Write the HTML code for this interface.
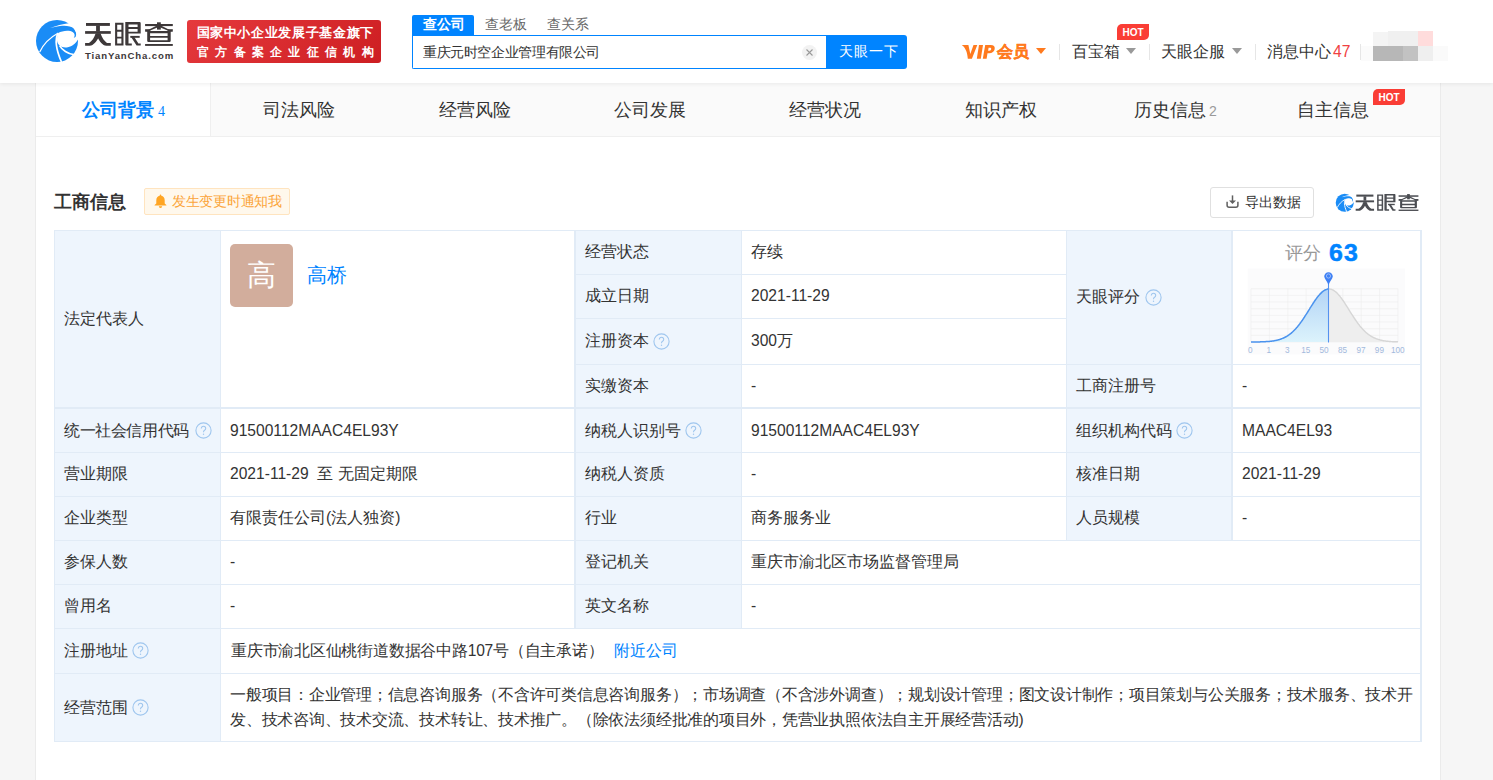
<!DOCTYPE html>
<html><head><meta charset="utf-8">
<style>
html,body{margin:0;padding:0;}
body{width:1493px;height:780px;overflow:hidden;background:#f6f6f6;position:relative;font-family:"Liberation Sans",sans-serif;color:#333;}
.a{position:absolute;white-space:nowrap;line-height:1;}
#hdr{position:absolute;left:0;top:0;width:1493px;height:83px;background:#fff;box-shadow:0 1px 4px rgba(0,0,0,0.07);z-index:5;}
#card{position:absolute;left:35px;top:83px;width:1404px;height:720px;background:#fff;border-left:1px solid #ebebeb;border-right:1px solid #ebebeb;}
.sep{position:absolute;top:44px;width:1px;height:16px;background:#e6e6e6;}
.tri{position:absolute;width:0;height:0;border-left:5px solid transparent;border-right:5px solid transparent;border-top:6px solid #999;}
.hot{position:absolute;background:#fa3d35;color:#fff;font-weight:700;font-size:10px;line-height:18px;text-align:center;border-radius:5px 0 5px 0;}
.tab{position:absolute;top:102px;font-size:17.8px;color:#333;white-space:nowrap;line-height:1;}
.vl{position:absolute;background:#e1ebf6;}
.lb{position:absolute;background:#eef5fd;}
.t{position:absolute;white-space:nowrap;line-height:1;font-size:15.6px;color:#333;}
.q{position:absolute;width:14px;height:14px;border:1px solid #a9cdf0;border-radius:50%;color:#9cc4ec;font-size:11px;line-height:14px;text-align:center;}
</style></head><body>
<div id="hdr">
  <!-- logo -->
  <svg class="a" style="left:32px;top:16px" width="50" height="50" viewBox="0 0 50 50">
    <circle cx="25" cy="25" r="21" fill="#1a8cf6"/>
    <path d="M18,12 C24,9.6 31,8 36.5,7.2 L50,0 L50,24 L42.5,22 C44.8,20.5 44.8,16 42,12.5 C39,9.8 33,9.2 28,10 C24,10.5 21,11.2 18,12 Z" fill="#fff"/>
    <path d="M26.3,17 C30,14.8 37,13.6 41,16.2 C43,17.8 43.2,20.2 41.7,21.5 L50,22 L50,23.7 L45.8,23.7 C44,27 40,30.5 35.9,31.2 C32,31.8 29.5,31 28.2,30 C25.8,28.3 24.8,26 25,23 C25.2,20.3 25.6,18.2 26.3,17 Z" fill="#fff"/>
    <path d="M7.7,36 C11,29 17,22 26.3,17" stroke="#fff" stroke-width="1.3" fill="none"/>
    <path d="M26,17.3 C23.5,22 23,31 29.5,46" stroke="#fff" stroke-width="1.7" fill="none"/>
    <path d="M27.6,29.6 C30,34 36,38 41.7,38.6" stroke="#fff" stroke-width="1.6" fill="none"/>
  </svg>
  <svg class="a" style="left:80px;top:18px" width="100" height="32" viewBox="80 18 100 32"><g fill="#3d3839">
<rect x="86" y="23" width="23.9" height="2.9"/>
<rect x="85.1" y="31.1" width="25.7" height="2.7"/>
<rect x="96.1" y="25.5" width="3.8" height="6"/>
<path d="M95.6,33.6 L100.2,33.6 C98.6,38.6 95.8,43 92.4,44.9 C91.6,45.4 90.8,45.7 89.6,45.7 L85.1,45.7 L85.1,42.9 L89,42.9 C92,41.4 94.2,38 95.6,33.6 Z"/>
<path d="M96.2,33.6 L100.6,33.6 C102,38 104.4,41.4 107,42.9 L110.8,42.9 L110.8,45.7 L106.4,45.7 C105.2,45.7 104.4,45.4 103.6,44.9 C100.4,43 97.6,38.6 96.2,33.6 Z"/>
<path fill-rule="evenodd" d="M115.1,22.8 H123.5 V45.5 H115.1 Z M117.2,24.7 V29.8 H121.4 V24.7 Z M117.2,31.7 V36.7 H121.4 V31.7 Z M117.2,38.6 V43.6 H121.4 V38.6 Z"/>
<path fill-rule="evenodd" d="M125.3,22.1 H139.6 Q140.7,22.1 140.7,23.2 V33.6 H128.5 V43.6 H131.8 V45.5 H126.4 Q125.3,45.5 125.3,44.4 Z M128.5,24.4 V27.1 H137.6 V24.4 Z M128.5,29 V31.7 H137.6 V29 Z"/>
<rect x="130.3" y="35.9" width="9.4" height="1.9"/>
<path d="M130.6,36.2 L133.8,36.2 L138.4,43.6 L140.7,43.6 L140.7,45.5 L136.6,45.5 Z"/>
<rect x="145.1" y="24" width="27.7" height="2.1"/>
<rect x="157" y="22.3" width="3.8" height="7.3"/>
<path d="M157.4,25.2 L158.6,27.1 L148.4,31.2 L145.6,31.2 Z"/>
<path d="M160.4,25.2 L159.2,27.1 L169.4,31.2 L172.2,31.2 Z"/>
<rect x="145.1" y="29.2" width="5.2" height="2.5"/>
<rect x="167.6" y="29.2" width="5.2" height="2.5"/>
<path fill-rule="evenodd" d="M147.2,30.9 H170.7 V40.8 Q170.7,42.1 169.4,42.1 H148.5 Q147.2,42.1 147.2,40.8 Z M150.1,33.2 V35.9 H167.6 V33.2 Z M150.1,37.8 V40.2 H167.6 V37.8 Z"/>
<rect x="145.1" y="44" width="27.7" height="1.9"/>
</g></svg>
  <div class="a" style="left:85px;top:51px;font-size:9.6px;font-weight:700;color:#3d3839;letter-spacing:0.85px;">TianYanCha.com</div>
  <div class="a" style="left:187px;top:20px;width:194px;height:43px;border-radius:3px;background:linear-gradient(135deg,#e5393d,#cd1e22);"></div>
  <div class="a" style="left:196.5px;top:26px;font-size:13.4px;letter-spacing:0.65px;color:#fff;font-weight:700;">国家中小企业发展子基金旗下</div>
  <div class="a" style="left:197px;top:46px;font-size:12.3px;color:#fff;letter-spacing:6.3px;font-weight:700;">官方备案企业征信机构</div>

  <!-- search -->
  <div class="a" style="left:412px;top:15px;width:62px;height:21px;background:#0084ff;border-radius:2px 2px 0 0;"></div>
  <div class="a" style="left:423px;top:18px;font-size:13.5px;font-weight:700;color:#fff;">查公司</div>
  <div class="a" style="left:485px;top:18px;font-size:13.5px;color:#666;">查老板</div>
  <div class="a" style="left:547px;top:18px;font-size:13.5px;color:#666;">查关系</div>
  <div class="a" style="left:412px;top:35px;width:414px;height:32px;border:1px solid #0084ff;border-right:none;border-radius:0 0 0 2px;background:#fff;"></div>
  <div class="a" style="left:423px;top:46px;font-size:13.5px;letter-spacing:-0.38px;color:#333;">重庆元时空企业管理有限公司</div>
  <div class="a" style="left:802px;top:45px;width:15px;height:15px;border-radius:50%;background:#f2f2f2;"></div><svg class="a" style="left:805px;top:48px" width="9" height="9" viewBox="0 0 9 9"><path d="M1.5 1.5L7.5 7.5M7.5 1.5L1.5 7.5" stroke="#999" stroke-width="1.1"/></svg>
  <div class="a" style="left:826px;top:35px;width:81px;height:34px;background:#0084ff;border-radius:0 3px 3px 0;"></div>
  <div class="a" style="left:839px;top:45px;font-size:13.8px;letter-spacing:1px;color:#fff;">天眼一下</div>

  <!-- right nav -->
  <svg class="a" style="left:958px;top:38px" width="40" height="26" viewBox="0 0 40 26"><g fill="#ff7a1e"><path d="M3.8,7.1 L10.4,7.1 L12.3,16 L15.5,7.1 L19.3,7.1 L13.9,20.7 L9.8,20.7 C9.3,15.2 8.2,10.6 3.8,7.1 Z"/><path d="M21,7.1 L25,7.1 L22.8,20.7 L18.8,20.7 Z"/><path fill-rule="evenodd" d="M27.2,7.1 L32.6,7.1 C35.8,7.1 37.1,8.6 36.7,11.1 C36.3,13.8 34.3,15.3 31,15.3 L29.5,15.3 L28.6,20.7 L24.8,20.7 Z M30.6,9.7 L30.1,12.7 L31.3,12.7 C32.5,12.7 33.1,12.1 33.2,11.1 C33.3,10.2 32.8,9.7 31.7,9.7 Z"/></g></svg>
  <div class="a" style="left:997px;top:44px;font-size:15.6px;font-weight:700;color:#ff7a1e;letter-spacing:-0.3px;-webkit-text-stroke:0.3px #ff7a1e;">会员</div>
  <div class="tri" style="left:1036px;top:48px;border-top-color:#ff7a1e;"></div>
  <div class="sep" style="left:1059px;"></div>
  <div class="a" style="left:1072px;top:44px;font-size:15.6px;color:#333;">百宝箱</div>
  <div class="tri" style="left:1126px;top:48px;"></div>
  <div class="hot" style="left:1117px;top:24px;width:32px;height:16px;">HOT</div>
  <div class="sep" style="left:1149px;"></div>
  <div class="a" style="left:1161px;top:44px;font-size:15.6px;color:#333;">天眼企服</div>
  <div class="tri" style="left:1232px;top:48px;"></div>
  <div class="sep" style="left:1255px;"></div>
  <div class="a" style="left:1267px;top:44px;font-size:15.6px;color:#333;">消息中心<span style="color:#f04142;margin-left:2px">47</span></div>
  <div class="sep" style="left:1360px;"></div>
  <!-- blurred user -->
  <div class="a" style="left:1373px;top:32px;width:15px;height:14px;background:#f4f4f4;"></div>
  <div class="a" style="left:1388px;top:31px;width:30px;height:15px;background:#f0f0f0;"></div>
  <div class="a" style="left:1418px;top:31px;width:15px;height:15px;background:#ffdcdc;"></div>
  <div class="a" style="left:1361px;top:46px;width:12px;height:15px;background:#fbfbfb;"></div>
  <div class="a" style="left:1373px;top:46px;width:30px;height:15px;background:#b7b7b7;"></div>
  <div class="a" style="left:1403px;top:46px;width:15px;height:15px;background:#c2c2c2;"></div>
  <div class="a" style="left:1418px;top:46px;width:15px;height:15px;background:#efefef;"></div>
  <div class="a" style="left:1433px;top:46px;width:15px;height:15px;background:#fafafa;"></div>
</div>

<div id="card"></div>
<!-- tabs -->
<div class="a" style="left:36px;top:83px;width:1404px;height:53px;background:#fafafa;border-bottom:1px solid #efefef;"></div>
<div class="a" style="left:36px;top:83px;width:174px;height:53px;background:#fff;border-right:1px solid #efefef;"></div>
<div class="a" style="left:82px;top:102px;font-size:17.8px;font-weight:700;color:#0084ff;">公司背景<span style="font-size:14px;font-weight:400;margin-left:4px;font-family:'Liberation Serif',serif">4</span></div>
<div class="tab" style="left:263px;">司法风险</div>
<div class="tab" style="left:439px;">经营风险</div>
<div class="tab" style="left:614px;">公司发展</div>
<div class="tab" style="left:789px;">经营状况</div>
<div class="tab" style="left:965px;">知识产权</div>
<div class="tab" style="left:1134px;">历史信息<span style="font-size:14px;color:#999;margin-left:3px">2</span></div>
<div class="tab" style="left:1297px;">自主信息</div>
<div class="hot" style="left:1373px;top:89px;width:32px;height:16px;">HOT</div>

<!-- title -->
<div class="a" style="left:54px;top:194px;font-size:17.8px;font-weight:700;color:#333;">工商信息</div>
<div class="a" style="left:144px;top:188px;width:144px;height:25px;background:#fff8ec;border:1px solid #ffe4bf;border-radius:2px;"></div>
<svg class="a" style="left:154px;top:194px" width="13" height="14" viewBox="0 0 13 14"><path d="M6.5 0.6c-0.5 0-0.8 0.3-0.8 0.8v0.4C3.6 2.3 2.3 4 2.3 6.2v3.2L0.6 10.9v0.7h11.8v-0.7L10.7 9.4V6.2C10.7 4 9.4 2.3 7.3 1.8V1.4c0-0.5-0.3-0.8-0.8-0.8z" fill="#ffa523"/><path d="M4.8 12.2a1.7 1.7 0 0 0 3.4 0z" fill="#ffa523"/></svg>
<div class="a" style="left:172px;top:195px;font-size:13.5px;letter-spacing:-0.3px;color:#fba53a;">发生变更时通知我</div>

<div class="a" style="left:1210px;top:187px;width:102px;height:29px;background:#fff;border:1px solid #e0e0e0;border-radius:3px;"></div>
<svg class="a" style="left:1225px;top:194px" width="15" height="15" viewBox="0 0 15 15"><path d="M2.1 7.8V11.2Q2.1 13.2 4.1 13.2H10.9Q12.9 13.2 12.9 11.2V7.8" stroke="#606060" stroke-width="1.5" fill="none"/><path d="M7.5 1.4V7.5" stroke="#606060" stroke-width="1.5"/><path d="M4 6.4H11L7.5 10.1Z" fill="#606060"/></svg>
<div class="a" style="left:1245px;top:196px;font-size:13.6px;color:#333;">导出数据</div>
<svg class="a" style="left:1334px;top:192px" width="21.5" height="21.5" viewBox="0 0 50 50">
    <circle cx="25" cy="25" r="21" fill="#1a8cf6"/>
    <path d="M18,12 C24,9.6 31,8 36.5,7.2 L50,0 L50,24 L42.5,22 C44.8,20.5 44.8,16 42,12.5 C39,9.8 33,9.2 28,10 C24,10.5 21,11.2 18,12 Z" fill="#fff"/>
    <path d="M26.3,17 C30,14.8 37,13.6 41,16.2 C43,17.8 43.2,20.2 41.7,21.5 L50,22 L50,23.7 L45.8,23.7 C44,27 40,30.5 35.9,31.2 C32,31.8 29.5,31 28.2,30 C25.8,28.3 24.8,26 25,23 C25.2,20.3 25.6,18.2 26.3,17 Z" fill="#fff"/>
    <path d="M7.7,36 C11,29 17,22 26.3,17" stroke="#fff" stroke-width="2" fill="none"/>
    <path d="M26,17.3 C23.5,22 23,31 29.5,46" stroke="#fff" stroke-width="2.2" fill="none"/>
    <path d="M27.6,29.6 C30,34 36,38 41.7,38.6" stroke="#fff" stroke-width="2" fill="none"/>
  </svg>
<svg class="a" style="left:1351.8px;top:190.9px" width="71.6" height="22.9" viewBox="80 18 100 32"><g fill="#4b4d52">
<rect x="86" y="23" width="23.9" height="2.9"/>
<rect x="85.1" y="31.1" width="25.7" height="2.7"/>
<rect x="96.1" y="25.5" width="3.8" height="6"/>
<path d="M95.6,33.6 L100.2,33.6 C98.6,38.6 95.8,43 92.4,44.9 C91.6,45.4 90.8,45.7 89.6,45.7 L85.1,45.7 L85.1,42.9 L89,42.9 C92,41.4 94.2,38 95.6,33.6 Z"/>
<path d="M96.2,33.6 L100.6,33.6 C102,38 104.4,41.4 107,42.9 L110.8,42.9 L110.8,45.7 L106.4,45.7 C105.2,45.7 104.4,45.4 103.6,44.9 C100.4,43 97.6,38.6 96.2,33.6 Z"/>
<path fill-rule="evenodd" d="M115.1,22.8 H123.5 V45.5 H115.1 Z M117.2,24.7 V29.8 H121.4 V24.7 Z M117.2,31.7 V36.7 H121.4 V31.7 Z M117.2,38.6 V43.6 H121.4 V38.6 Z"/>
<path fill-rule="evenodd" d="M125.3,22.1 H139.6 Q140.7,22.1 140.7,23.2 V33.6 H128.5 V43.6 H131.8 V45.5 H126.4 Q125.3,45.5 125.3,44.4 Z M128.5,24.4 V27.1 H137.6 V24.4 Z M128.5,29 V31.7 H137.6 V29 Z"/>
<rect x="130.3" y="35.9" width="9.4" height="1.9"/>
<path d="M130.6,36.2 L133.8,36.2 L138.4,43.6 L140.7,43.6 L140.7,45.5 L136.6,45.5 Z"/>
<rect x="145.1" y="24" width="27.7" height="2.1"/>
<rect x="157" y="22.3" width="3.8" height="7.3"/>
<path d="M157.4,25.2 L158.6,27.1 L148.4,31.2 L145.6,31.2 Z"/>
<path d="M160.4,25.2 L159.2,27.1 L169.4,31.2 L172.2,31.2 Z"/>
<rect x="145.1" y="29.2" width="5.2" height="2.5"/>
<rect x="167.6" y="29.2" width="5.2" height="2.5"/>
<path fill-rule="evenodd" d="M147.2,30.9 H170.7 V40.8 Q170.7,42.1 169.4,42.1 H148.5 Q147.2,42.1 147.2,40.8 Z M150.1,33.2 V35.9 H167.6 V33.2 Z M150.1,37.8 V40.2 H167.6 V37.8 Z"/>
<rect x="145.1" y="44" width="27.7" height="1.9"/>
</g></svg>

<!-- TABLE -->
<div class="a" style="left:54px;top:230px;width:1368px;height:512px;background:#fff;"></div>
<!-- label backgrounds -->
<div class="lb" style="left:55px;top:231px;width:165px;height:510px;"></div>
<div class="lb" style="left:576px;top:231px;width:165px;height:397px;"></div>
<div class="lb" style="left:1067px;top:231px;width:164px;height:309px;"></div>
<!-- horizontal lines -->
<div class="vl" style="left:54px;top:230px;width:1368px;height:1px;"></div>
<div class="vl" style="left:576px;top:274px;width:490px;height:1px;"></div>
<div class="vl" style="left:576px;top:318px;width:490px;height:1px;"></div>
<div class="vl" style="left:576px;top:364px;width:846px;height:1px;"></div>
<div class="vl" style="left:54px;top:407px;width:1368px;height:2px;"></div>
<div class="vl" style="left:54px;top:452px;width:1368px;height:1px;"></div>
<div class="vl" style="left:54px;top:496px;width:1368px;height:1px;"></div>
<div class="vl" style="left:54px;top:540px;width:1368px;height:1px;"></div>
<div class="vl" style="left:54px;top:584px;width:1368px;height:1px;"></div>
<div class="vl" style="left:54px;top:628px;width:1368px;height:1px;"></div>
<div class="vl" style="left:54px;top:673px;width:1368px;height:1px;"></div>
<div class="vl" style="left:54px;top:741px;width:1368px;height:1px;"></div>
<!-- vertical lines -->
<div class="vl" style="left:54px;top:230px;width:1px;height:512px;"></div>
<div class="vl" style="left:220px;top:230px;width:1px;height:512px;"></div>
<div class="vl" style="left:574px;top:230px;width:2px;height:399px;"></div>
<div class="vl" style="left:741px;top:230px;width:1px;height:399px;"></div>
<div class="vl" style="left:1066px;top:230px;width:1px;height:311px;"></div>
<div class="vl" style="left:1231px;top:230px;width:2px;height:311px;"></div>
<div class="vl" style="left:1420px;top:230px;width:2px;height:512px;"></div>

<!-- row A -->
<div class="t" style="left:64px;top:311px;">法定代表人</div>
<div class="a" style="left:230px;top:244px;width:63px;height:63px;border-radius:5px;background:#d2ad9c;"></div>
<div class="a" style="left:247px;top:261px;font-size:29px;color:#fff;">高</div>
<div class="a" style="left:307px;top:266px;font-size:19.8px;color:#0084ff;">高桥</div>

<div class="t" style="left:585px;top:244px;">经营状态</div>
<div class="t" style="left:751px;top:244px;">存续</div>
<div class="t" style="left:585px;top:288px;">成立日期</div>
<div class="t" style="left:751px;top:288px;">2021-11-29</div>
<div class="t" style="left:585px;top:333px;">注册资本</div>
<svg class="a" style="left:653px;top:333px" width="17" height="17" viewBox="0 0 17 17"><circle cx="8.5" cy="8.5" r="7.6" fill="none" stroke="#9fc6ee" stroke-width="1.1"/><path d="M6.3 6.6C6.3 5.2 7.2 4.3 8.5 4.3S10.7 5.2 10.7 6.4C10.7 7.6 9.8 8 9.2 8.5C8.7 8.9 8.5 9.3 8.5 10.3" fill="none" stroke="#9fc6ee" stroke-width="1.05"/><circle cx="8.5" cy="12.3" r="0.7" fill="#9fc6ee"/></svg>
<div class="t" style="left:751px;top:333px;">300万</div>
<div class="t" style="left:585px;top:378px;">实缴资本</div>
<div class="t" style="left:751px;top:378px;">-</div>

<div class="t" style="left:1076px;top:289px;">天眼评分</div>
<svg class="a" style="left:1144.5px;top:288.5px" width="17" height="17" viewBox="0 0 17 17"><circle cx="8.5" cy="8.5" r="7.6" fill="none" stroke="#9fc6ee" stroke-width="1.1"/><path d="M6.3 6.6C6.3 5.2 7.2 4.3 8.5 4.3S10.7 5.2 10.7 6.4C10.7 7.6 9.8 8 9.2 8.5C8.7 8.9 8.5 9.3 8.5 10.3" fill="none" stroke="#9fc6ee" stroke-width="1.05"/><circle cx="8.5" cy="12.3" r="0.7" fill="#9fc6ee"/></svg>
<div class="t" style="left:1076px;top:378px;">工商注册号</div>
<div class="t" style="left:1242px;top:378px;">-</div>
<!-- CHART --><svg class="a" style="left:1240px;top:240px" width="175" height="120" viewBox="0 0 175 120">
<defs><linearGradient id="bg1" x1="0" y1="0" x2="0" y2="1"><stop offset="0" stop-color="#b3d4f6"/><stop offset="1" stop-color="#dcf3fc"/></linearGradient></defs>
<rect x="7.7" y="28.6" width="157.3" height="85.8" fill="#fbfbfc"/>
<g stroke="#ececec" stroke-width="0.6"><line x1="11.0" y1="48.7" x2="11.0" y2="102" /><line x1="29.4" y1="48.7" x2="29.4" y2="102" /><line x1="47.8" y1="48.7" x2="47.8" y2="102" /><line x1="66.1" y1="48.7" x2="66.1" y2="102" /><line x1="84.5" y1="48.7" x2="84.5" y2="102" /><line x1="102.9" y1="48.7" x2="102.9" y2="102" /><line x1="121.2" y1="48.7" x2="121.2" y2="102" /><line x1="139.6" y1="48.7" x2="139.6" y2="102" /><line x1="158.0" y1="48.7" x2="158.0" y2="102" /><line x1="11" y1="48.7" x2="158" y2="48.7" /><line x1="11" y1="55.4" x2="158" y2="55.4" /><line x1="11" y1="62.0" x2="158" y2="62.0" /><line x1="11" y1="68.7" x2="158" y2="68.7" /><line x1="11" y1="75.4" x2="158" y2="75.4" /><line x1="11" y1="82.0" x2="158" y2="82.0" /><line x1="11" y1="88.7" x2="158" y2="88.7" /><line x1="11" y1="95.3" x2="158" y2="95.3" /><line x1="11" y1="102.0" x2="158" y2="102.0" /></g>
<path d="M88.5,102 L88.5,49.0 89.0,49.0 89.5,49.0 90.0,49.1 90.5,49.1 91.0,49.3 91.5,49.4 92.0,49.6 92.5,49.8 93.0,50.0 93.5,50.3 94.0,50.6 94.5,51.0 95.0,51.3 95.5,51.7 96.0,52.1 96.5,52.6 97.0,53.1 97.5,53.6 98.0,54.1 98.5,54.7 99.0,55.2 99.5,55.8 100.0,56.4 100.5,57.1 101.0,57.7 101.5,58.4 102.0,59.1 102.5,59.8 103.0,60.5 103.5,61.2 104.0,62.0 104.5,62.7 105.0,63.5 105.5,64.3 106.0,65.1 106.5,65.9 107.0,66.7 107.5,67.4 108.0,68.2 108.5,69.1 109.0,69.9 109.5,70.7 110.0,71.5 110.5,72.3 111.0,73.1 111.5,73.9 112.0,74.6 112.5,75.4 113.0,76.2 113.5,77.0 114.0,77.7 114.5,78.5 115.0,79.2 115.5,80.0 116.0,80.7 116.5,81.4 117.0,82.1 117.5,82.8 118.0,83.5 118.5,84.1 119.0,84.8 119.5,85.4 120.0,86.1 120.5,86.7 121.0,87.3 121.5,87.8 122.0,88.4 122.5,89.0 123.0,89.5 123.5,90.0 124.0,90.5 124.5,91.0 125.0,91.5 125.5,92.0 126.0,92.4 126.5,92.9 127.0,93.3 127.5,93.7 128.0,94.1 128.5,94.5 129.0,94.8 129.5,95.2 130.0,95.5 130.5,95.8 131.0,96.2 131.5,96.5 132.0,96.7 132.5,97.0 133.0,97.3 133.5,97.5 134.0,97.8 134.5,98.0 135.0,98.2 135.5,98.4 136.0,98.6 136.5,98.8 137.0,99.0 137.5,99.2 138.0,99.4 138.5,99.5 139.0,99.7 139.5,99.8 140.0,99.9 140.5,100.1 141.0,100.2 141.5,100.3 142.0,100.4 142.5,100.5 143.0,100.6 143.5,100.7 144.0,100.8 144.5,100.9 145.0,100.9 145.5,101.0 146.0,101.1 146.5,101.2 147.0,101.2 147.5,101.3 148.0,101.3 148.5,101.4 149.0,101.4 149.5,101.5 150.0,101.5 150.5,101.5 151.0,101.6 151.5,101.6 152.0,101.6 152.5,101.7 153.0,101.7 153.5,101.7 154.0,101.7 154.5,101.8 155.0,101.8 155.5,101.8 156.0,101.8 156.5,101.8 157.0,101.8 157.5,101.8 158.0,101.9 L158,102 Z" fill="#eeeeee"/>
<path d="M11,102 L11.0,102.0 11.5,102.0 12.0,102.0 12.5,102.0 13.0,102.0 13.5,102.0 14.0,102.0 14.5,101.9 15.0,101.9 15.5,101.9 16.0,101.9 16.5,101.9 17.0,101.9 17.5,101.9 18.0,101.9 18.5,101.9 19.0,101.9 19.5,101.9 20.0,101.9 20.5,101.8 21.0,101.8 21.5,101.8 22.0,101.8 22.5,101.8 23.0,101.8 23.5,101.8 24.0,101.7 24.5,101.7 25.0,101.7 25.5,101.7 26.0,101.6 26.5,101.6 27.0,101.6 27.5,101.5 28.0,101.5 28.5,101.5 29.0,101.4 29.5,101.4 30.0,101.3 30.5,101.3 31.0,101.2 31.5,101.2 32.0,101.1 32.5,101.0 33.0,100.9 33.5,100.9 34.0,100.8 34.5,100.7 35.0,100.6 35.5,100.5 36.0,100.4 36.5,100.3 37.0,100.2 37.5,100.1 38.0,99.9 38.5,99.8 39.0,99.7 39.5,99.5 40.0,99.4 40.5,99.2 41.0,99.0 41.5,98.8 42.0,98.6 42.5,98.4 43.0,98.2 43.5,98.0 44.0,97.8 44.5,97.5 45.0,97.3 45.5,97.0 46.0,96.7 46.5,96.5 47.0,96.2 47.5,95.8 48.0,95.5 48.5,95.2 49.0,94.8 49.5,94.5 50.0,94.1 50.5,93.7 51.0,93.3 51.5,92.9 52.0,92.4 52.5,92.0 53.0,91.5 53.5,91.0 54.0,90.5 54.5,90.0 55.0,89.5 55.5,89.0 56.0,88.4 56.5,87.8 57.0,87.3 57.5,86.7 58.0,86.1 58.5,85.4 59.0,84.8 59.5,84.1 60.0,83.5 60.5,82.8 61.0,82.1 61.5,81.4 62.0,80.7 62.5,80.0 63.0,79.2 63.5,78.5 64.0,77.7 64.5,77.0 65.0,76.2 65.5,75.4 66.0,74.6 66.5,73.9 67.0,73.1 67.5,72.3 68.0,71.5 68.5,70.7 69.0,69.9 69.5,69.1 70.0,68.2 70.5,67.4 71.0,66.7 71.5,65.9 72.0,65.1 72.5,64.3 73.0,63.5 73.5,62.7 74.0,62.0 74.5,61.2 75.0,60.5 75.5,59.8 76.0,59.1 76.5,58.4 77.0,57.7 77.5,57.1 78.0,56.4 78.5,55.8 79.0,55.2 79.5,54.7 80.0,54.1 80.5,53.6 81.0,53.1 81.5,52.6 82.0,52.1 82.5,51.7 83.0,51.3 83.5,51.0 84.0,50.6 84.5,50.3 85.0,50.0 85.5,49.8 86.0,49.6 86.5,49.4 87.0,49.3 87.5,49.1 88.0,49.1 88.5,49.0 L88.5,102 Z" fill="url(#bg1)"/>
<path d="M88.5,49.0 89.0,49.0 89.5,49.0 90.0,49.1 90.5,49.1 91.0,49.3 91.5,49.4 92.0,49.6 92.5,49.8 93.0,50.0 93.5,50.3 94.0,50.6 94.5,51.0 95.0,51.3 95.5,51.7 96.0,52.1 96.5,52.6 97.0,53.1 97.5,53.6 98.0,54.1 98.5,54.7 99.0,55.2 99.5,55.8 100.0,56.4 100.5,57.1 101.0,57.7 101.5,58.4 102.0,59.1 102.5,59.8 103.0,60.5 103.5,61.2 104.0,62.0 104.5,62.7 105.0,63.5 105.5,64.3 106.0,65.1 106.5,65.9 107.0,66.7 107.5,67.4 108.0,68.2 108.5,69.1 109.0,69.9 109.5,70.7 110.0,71.5 110.5,72.3 111.0,73.1 111.5,73.9 112.0,74.6 112.5,75.4 113.0,76.2 113.5,77.0 114.0,77.7 114.5,78.5 115.0,79.2 115.5,80.0 116.0,80.7 116.5,81.4 117.0,82.1 117.5,82.8 118.0,83.5 118.5,84.1 119.0,84.8 119.5,85.4 120.0,86.1 120.5,86.7 121.0,87.3 121.5,87.8 122.0,88.4 122.5,89.0 123.0,89.5 123.5,90.0 124.0,90.5 124.5,91.0 125.0,91.5 125.5,92.0 126.0,92.4 126.5,92.9 127.0,93.3 127.5,93.7 128.0,94.1 128.5,94.5 129.0,94.8 129.5,95.2 130.0,95.5 130.5,95.8 131.0,96.2 131.5,96.5 132.0,96.7 132.5,97.0 133.0,97.3 133.5,97.5 134.0,97.8 134.5,98.0 135.0,98.2 135.5,98.4 136.0,98.6 136.5,98.8 137.0,99.0 137.5,99.2 138.0,99.4 138.5,99.5 139.0,99.7 139.5,99.8 140.0,99.9 140.5,100.1 141.0,100.2 141.5,100.3 142.0,100.4 142.5,100.5 143.0,100.6 143.5,100.7 144.0,100.8 144.5,100.9 145.0,100.9 145.5,101.0 146.0,101.1 146.5,101.2 147.0,101.2 147.5,101.3 148.0,101.3 148.5,101.4 149.0,101.4 149.5,101.5 150.0,101.5 150.5,101.5 151.0,101.6 151.5,101.6 152.0,101.6 152.5,101.7 153.0,101.7 153.5,101.7 154.0,101.7 154.5,101.8 155.0,101.8 155.5,101.8 156.0,101.8 156.5,101.8 157.0,101.8 157.5,101.8 158.0,101.9" fill="none" stroke="#d6d6d6" stroke-width="1.4"/>
<path d="M11.0,102.0 11.5,102.0 12.0,102.0 12.5,102.0 13.0,102.0 13.5,102.0 14.0,102.0 14.5,101.9 15.0,101.9 15.5,101.9 16.0,101.9 16.5,101.9 17.0,101.9 17.5,101.9 18.0,101.9 18.5,101.9 19.0,101.9 19.5,101.9 20.0,101.9 20.5,101.8 21.0,101.8 21.5,101.8 22.0,101.8 22.5,101.8 23.0,101.8 23.5,101.8 24.0,101.7 24.5,101.7 25.0,101.7 25.5,101.7 26.0,101.6 26.5,101.6 27.0,101.6 27.5,101.5 28.0,101.5 28.5,101.5 29.0,101.4 29.5,101.4 30.0,101.3 30.5,101.3 31.0,101.2 31.5,101.2 32.0,101.1 32.5,101.0 33.0,100.9 33.5,100.9 34.0,100.8 34.5,100.7 35.0,100.6 35.5,100.5 36.0,100.4 36.5,100.3 37.0,100.2 37.5,100.1 38.0,99.9 38.5,99.8 39.0,99.7 39.5,99.5 40.0,99.4 40.5,99.2 41.0,99.0 41.5,98.8 42.0,98.6 42.5,98.4 43.0,98.2 43.5,98.0 44.0,97.8 44.5,97.5 45.0,97.3 45.5,97.0 46.0,96.7 46.5,96.5 47.0,96.2 47.5,95.8 48.0,95.5 48.5,95.2 49.0,94.8 49.5,94.5 50.0,94.1 50.5,93.7 51.0,93.3 51.5,92.9 52.0,92.4 52.5,92.0 53.0,91.5 53.5,91.0 54.0,90.5 54.5,90.0 55.0,89.5 55.5,89.0 56.0,88.4 56.5,87.8 57.0,87.3 57.5,86.7 58.0,86.1 58.5,85.4 59.0,84.8 59.5,84.1 60.0,83.5 60.5,82.8 61.0,82.1 61.5,81.4 62.0,80.7 62.5,80.0 63.0,79.2 63.5,78.5 64.0,77.7 64.5,77.0 65.0,76.2 65.5,75.4 66.0,74.6 66.5,73.9 67.0,73.1 67.5,72.3 68.0,71.5 68.5,70.7 69.0,69.9 69.5,69.1 70.0,68.2 70.5,67.4 71.0,66.7 71.5,65.9 72.0,65.1 72.5,64.3 73.0,63.5 73.5,62.7 74.0,62.0 74.5,61.2 75.0,60.5 75.5,59.8 76.0,59.1 76.5,58.4 77.0,57.7 77.5,57.1 78.0,56.4 78.5,55.8 79.0,55.2 79.5,54.7 80.0,54.1 80.5,53.6 81.0,53.1 81.5,52.6 82.0,52.1 82.5,51.7 83.0,51.3 83.5,51.0 84.0,50.6 84.5,50.3 85.0,50.0 85.5,49.8 86.0,49.6 86.5,49.4 87.0,49.3 87.5,49.1 88.0,49.1 88.5,49.0" fill="none" stroke="#4b93ee" stroke-width="1.5"/>
<line x1="88.5" y1="42" x2="88.5" y2="102.5" stroke="#5592f0" stroke-width="1.1"/>
<path d="M84.20,36.60 A4.3,4.3 0 1 1 92.80,36.60 C92.60,39.00 89.70,41.50 88.5,45.00 C87.30,41.50 84.40,39.00 84.20,36.60 Z" fill="#3f80f4"/>
<circle cx="88.5" cy="36" r="2.1" fill="none" stroke="#a9c8fa" stroke-width="0.8"/>
<g font-family="Liberation Sans" font-size="8.2" fill="#a2b9dd"><text x="10.4" y="113" text-anchor="middle">0</text><text x="28.8" y="113" text-anchor="middle">1</text><text x="47.2" y="113" text-anchor="middle">3</text><text x="65.7" y="113" text-anchor="middle">15</text><text x="84.1" y="113" text-anchor="middle">50</text><text x="102.5" y="113" text-anchor="middle">85</text><text x="121.0" y="113" text-anchor="middle">97</text><text x="139.4" y="113" text-anchor="middle">99</text><text x="157.8" y="113" text-anchor="middle">100</text></g>
</svg>
<div class="a" style="left:1285px;top:245px;font-size:17.5px;color:#999;">评分</div>
<div class="a" style="left:1329px;top:242px;font-size:23px;font-weight:700;color:#0084ff;letter-spacing:1.2px;-webkit-text-stroke:0.5px #0084ff;transform-origin:0 0;transform:scaleX(1.08);">63</div>

<!-- rows -->
<div class="t" style="left:64px;top:423px;letter-spacing:-0.4px;">统一社会信用代码</div>
<svg class="a" style="left:195px;top:421.5px" width="17" height="17" viewBox="0 0 17 17"><circle cx="8.5" cy="8.5" r="7.6" fill="none" stroke="#9fc6ee" stroke-width="1.1"/><path d="M6.3 6.6C6.3 5.2 7.2 4.3 8.5 4.3S10.7 5.2 10.7 6.4C10.7 7.6 9.8 8 9.2 8.5C8.7 8.9 8.5 9.3 8.5 10.3" fill="none" stroke="#9fc6ee" stroke-width="1.05"/><circle cx="8.5" cy="12.3" r="0.7" fill="#9fc6ee"/></svg>
<div class="t" style="left:230px;top:423px;">91500112MAAC4EL93Y</div>
<div class="t" style="left:585px;top:423px;">纳税人识别号</div>
<svg class="a" style="left:685px;top:421.5px" width="17" height="17" viewBox="0 0 17 17"><circle cx="8.5" cy="8.5" r="7.6" fill="none" stroke="#9fc6ee" stroke-width="1.1"/><path d="M6.3 6.6C6.3 5.2 7.2 4.3 8.5 4.3S10.7 5.2 10.7 6.4C10.7 7.6 9.8 8 9.2 8.5C8.7 8.9 8.5 9.3 8.5 10.3" fill="none" stroke="#9fc6ee" stroke-width="1.05"/><circle cx="8.5" cy="12.3" r="0.7" fill="#9fc6ee"/></svg>
<div class="t" style="left:751px;top:423px;">91500112MAAC4EL93Y</div>
<div class="t" style="left:1076px;top:423px;">组织机构代码</div>
<svg class="a" style="left:1176px;top:421.5px" width="17" height="17" viewBox="0 0 17 17"><circle cx="8.5" cy="8.5" r="7.6" fill="none" stroke="#9fc6ee" stroke-width="1.1"/><path d="M6.3 6.6C6.3 5.2 7.2 4.3 8.5 4.3S10.7 5.2 10.7 6.4C10.7 7.6 9.8 8 9.2 8.5C8.7 8.9 8.5 9.3 8.5 10.3" fill="none" stroke="#9fc6ee" stroke-width="1.05"/><circle cx="8.5" cy="12.3" r="0.7" fill="#9fc6ee"/></svg>
<div class="t" style="left:1242px;top:423px;">MAAC4EL93</div>

<div class="t" style="left:64px;top:466px;">营业期限</div>
<div class="t" style="left:230px;top:466px;">2021-11-29&nbsp; 至 无固定期限</div>
<div class="t" style="left:585px;top:466px;">纳税人资质</div>
<div class="t" style="left:751px;top:466px;">-</div>
<div class="t" style="left:1076px;top:466px;">核准日期</div>
<div class="t" style="left:1242px;top:466px;">2021-11-29</div>

<div class="t" style="left:64px;top:510px;">企业类型</div>
<div class="t" style="left:230px;top:510px;">有限责任公司(法人独资)</div>
<div class="t" style="left:585px;top:510px;">行业</div>
<div class="t" style="left:751px;top:510px;">商务服务业</div>
<div class="t" style="left:1076px;top:510px;">人员规模</div>
<div class="t" style="left:1242px;top:510px;">-</div>

<div class="t" style="left:64px;top:554px;">参保人数</div>
<div class="t" style="left:230px;top:554px;">-</div>
<div class="t" style="left:585px;top:554px;">登记机关</div>
<div class="t" style="left:751px;top:554px;">重庆市渝北区市场监督管理局</div>

<div class="t" style="left:64px;top:598px;">曾用名</div>
<div class="t" style="left:230px;top:598px;">-</div>
<div class="t" style="left:585px;top:598px;">英文名称</div>
<div class="t" style="left:751px;top:598px;">-</div>

<div class="t" style="left:64px;top:643px;">注册地址</div>
<svg class="a" style="left:132px;top:641.5px" width="17" height="17" viewBox="0 0 17 17"><circle cx="8.5" cy="8.5" r="7.6" fill="none" stroke="#9fc6ee" stroke-width="1.1"/><path d="M6.3 6.6C6.3 5.2 7.2 4.3 8.5 4.3S10.7 5.2 10.7 6.4C10.7 7.6 9.8 8 9.2 8.5C8.7 8.9 8.5 9.3 8.5 10.3" fill="none" stroke="#9fc6ee" stroke-width="1.05"/><circle cx="8.5" cy="12.3" r="0.7" fill="#9fc6ee"/></svg>
<div class="t" style="left:231px;top:643px;letter-spacing:-0.22px;">重庆市渝北区仙桃街道数据谷中路107号（自主承诺）<span style="color:#0084ff;margin-left:10px;letter-spacing:0">附近公司</span></div>

<div class="t" style="left:64px;top:700px;">经营范围</div>
<svg class="a" style="left:132px;top:698.5px" width="17" height="17" viewBox="0 0 17 17"><circle cx="8.5" cy="8.5" r="7.6" fill="none" stroke="#9fc6ee" stroke-width="1.1"/><path d="M6.3 6.6C6.3 5.2 7.2 4.3 8.5 4.3S10.7 5.2 10.7 6.4C10.7 7.6 9.8 8 9.2 8.5C8.7 8.9 8.5 9.3 8.5 10.3" fill="none" stroke="#9fc6ee" stroke-width="1.05"/><circle cx="8.5" cy="12.3" r="0.7" fill="#9fc6ee"/></svg>
<div class="t" style="left:230px;top:682px;line-height:25px;letter-spacing:-0.23px;">一般项目：企业管理；信息咨询服务（不含许可类信息咨询服务）；市场调查（不含涉外调查）；规划设计管理；图文设计制作；项目策划与公关服务；技术服务、技术开<br>发、技术咨询、技术交流、技术转让、技术推广。（除依法须经批准的项目外，凭营业执照依法自主开展经营活动)</div>

</body></html>
